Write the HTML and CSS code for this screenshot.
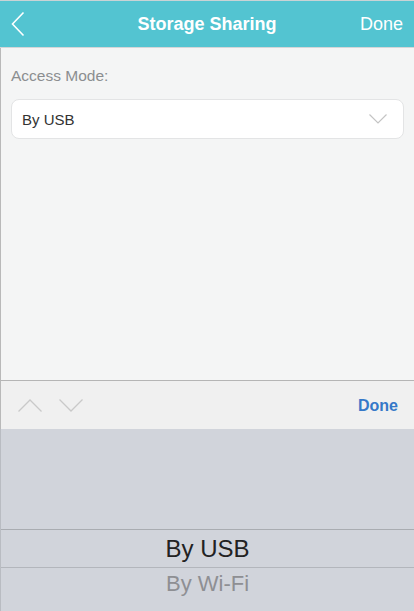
FILE: index.html
```html
<!DOCTYPE html>
<html>
<head>
<meta charset="utf-8">
<link rel="stylesheet" href="styles.css">
</head>
<body>
<div class="app">
  <header class="nav">
    <svg class="back" width="14" height="26" viewBox="0 0 14 26"><path d="M12.5 1.5 L1.5 13 L12.5 24.5" fill="none" stroke="#fff" stroke-width="1.6"/></svg>
    <div class="title">Storage Sharing</div>
    <div class="nav-done">Done</div>
  </header>
  <main class="content">
    <div class="label">Access Mode:</div>
    <div class="select">
      <span class="select-value">By USB</span>
      <svg width="18" height="10" viewBox="0 0 18 10"><path d="M0.5 0.5 L9 9 L17.5 0.5" fill="none" stroke="#c4c4c4" stroke-width="1.2"/></svg>
    </div>
  </main>
  <div class="toolbar">
    <div class="arrows">
      <svg width="24" height="13" viewBox="0 0 24 13"><path d="M0.5 12.5 L12 1 L23.5 12.5" fill="none" stroke="#c9c9c9" stroke-width="1.3"/></svg>
      <svg width="24" height="13" viewBox="0 0 24 13"><path d="M0.5 0.5 L12 12 L23.5 0.5" fill="none" stroke="#c9c9c9" stroke-width="1.3"/></svg>
    </div>
    <div class="tb-done">Done</div>
  </div>
  <div class="picker">
    <div class="picker-spacer"></div>
    <div class="picker-item selected">By USB</div>
    <div class="picker-item other">By Wi-Fi</div>
  </div>
</div>
</body>
</html>
```
FILE: styles.css
```css
* { box-sizing: border-box; margin: 0; padding: 0; }
html, body { width: 414px; height: 611px; overflow: hidden; }
body { font-family: "Liberation Sans", Arial, sans-serif; background: #f4f5f5; }
.app { display: flex; flex-direction: column; height: 611px; }
.nav {
  height: 48px; flex: none;
  background: #53c4d1;
  border-top: 1px solid #c9d3d5;
  border-bottom: 1px solid #d4d6d8;
  display: grid; grid-template-columns: 1fr auto 1fr; align-items: center;
  padding: 0 11px 0 11px;
  color: #fff;
}
.back { display: block; }
.title { font-weight: bold; font-size: 18px; }
.nav-done { font-size: 18px; justify-self: end; }
.content {
  flex: none; height: 332px;
  border-left: 1px solid #b9b9b9;
  padding: 20px 10px 0 10px;
  background: #f4f5f5;
}
.label { font-size: 15.5px; color: #8b8e90; line-height: 16px; }
.select {
  margin-top: 15px;
  height: 40px;
  background: #fff;
  border: 1px solid #e3e4e5;
  border-radius: 8px;
  display: flex; align-items: center; justify-content: space-between;
  padding: 0 16px 0 10px;
}
.select-value { font-size: 15px; color: #333; }
.toolbar {
  flex: none; height: 49px;
  background: #f0f0f0;
  border-top: 1px solid #b5b5b5;
  border-left: 1px solid #b9b9b9;
  display: flex; align-items: center; justify-content: space-between;
  padding: 1px 16px 0 17px;
}
.arrows { display: flex; gap: 17px; align-items: center; }
.arrows svg { display: block; }
.tb-done { color: #3578c8; font-weight: bold; font-size: 16px; }
.picker {
  flex: 1;
  background: #d1d4db;
  border-left: 1px solid #b9bcc2;
  display: flex; flex-direction: column;
}
.picker-spacer { height: 101px; border-bottom: 1px solid #a9acb1; flex: none; }
.picker-item {
  flex: none;
  display: flex; align-items: center; justify-content: center;
}
.picker-item.selected { height: 38px; color: #222; border-bottom: 1px solid #b3b6bc; font-size: 24px; }
.picker-item.other { height: 32px; color: #8e8f93; font-size: 22px; }
```
